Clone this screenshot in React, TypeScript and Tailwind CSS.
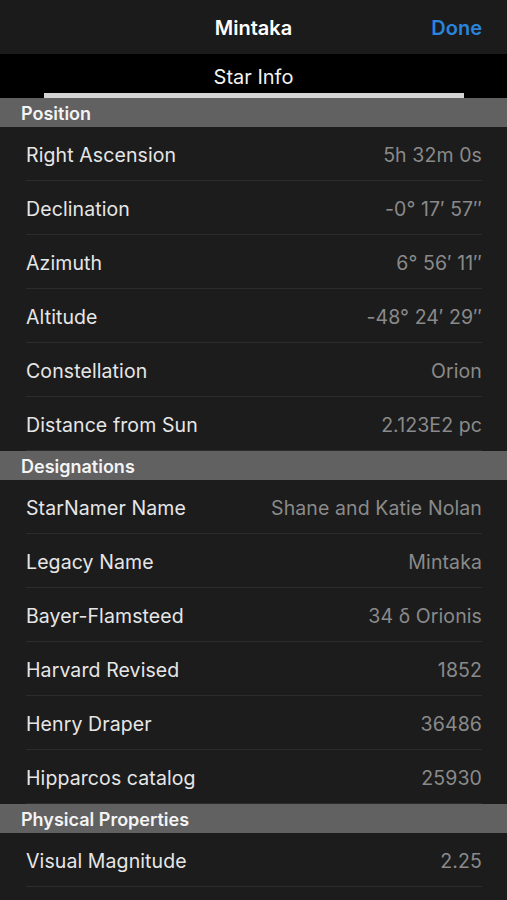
type Row = { label: string; value: string };

const sections: { title: string; rows: Row[] }[] = [
  {
    title: "Position",
    rows: [
      { label: "Right Ascension", value: "5h 32m 0s" },
      { label: "Declination", value: "-0° 17′ 57″" },
      { label: "Azimuth", value: "6° 56′ 11″" },
      { label: "Altitude", value: "-48° 24′ 29″" },
      { label: "Constellation", value: "Orion" },
      { label: "Distance from Sun", value: "2.123E2 pc" },
    ],
  },
  {
    title: "Designations",
    rows: [
      { label: "StarNamer Name", value: "Shane and Katie Nolan" },
      { label: "Legacy Name", value: "Mintaka" },
      { label: "Bayer-Flamsteed", value: "34 δ Orionis" },
      { label: "Harvard Revised", value: "1852" },
      { label: "Henry Draper", value: "36486" },
      { label: "Hipparcos catalog", value: "25930" },
    ],
  },
  {
    title: "Physical Properties",
    rows: [{ label: "Visual Magnitude", value: "2.25" }],
  },
];

function InfoRow({ label, value }: Row) {
  return (
    <div className="pl-[26px] pr-[25px]">
      <div className="h-[54px] pt-[4px] flex items-center justify-between border-b border-[#2c2c2c]">
        <span className="text-[19.5px] tracking-[0.1px] text-[#e6e6e6]">{label}</span>
        <span className="text-[19.5px] tracking-[0.1px] text-[#8a8a8a]">{value}</span>
      </div>
    </div>
  );
}

export default function App() {
  return (
    <div
      className="w-[507px] h-[900px] overflow-hidden bg-[#1c1c1c]"
      style={{ fontFamily: "Inter, 'Open Sans', sans-serif" }}
    >
      {/* Nav bar */}
      <div className="relative h-[54px] pt-[2px] bg-[#1b1b1b] flex items-center justify-center">
        <span className="text-[20px] font-semibold text-white">Mintaka</span>
        <span className="absolute right-[25px] top-[13px] text-[20px] font-semibold text-[#2a84dc]">
          Done
        </span>
      </div>

      {/* Tab strip */}
      <div className="bg-black h-[44px] flex flex-col items-center">
        <div className="h-[39px] pt-[6px] flex items-center text-[20px] text-[#f2f2f2]">Star Info</div>
        <div className="w-[420px] h-[5px] bg-[#d4d4d4]" />
      </div>

      {sections.map((s) => (
        <div key={s.title}>
          <div className="h-[29px] pt-[2px] bg-[#616161] flex items-center pl-[21px] text-[18px] font-semibold text-[#f4f4f4]">
            {s.title}
          </div>
          {s.rows.map((r) => (
            <InfoRow key={r.label} {...r} />
          ))}
        </div>
      ))}
    </div>
  );
}
